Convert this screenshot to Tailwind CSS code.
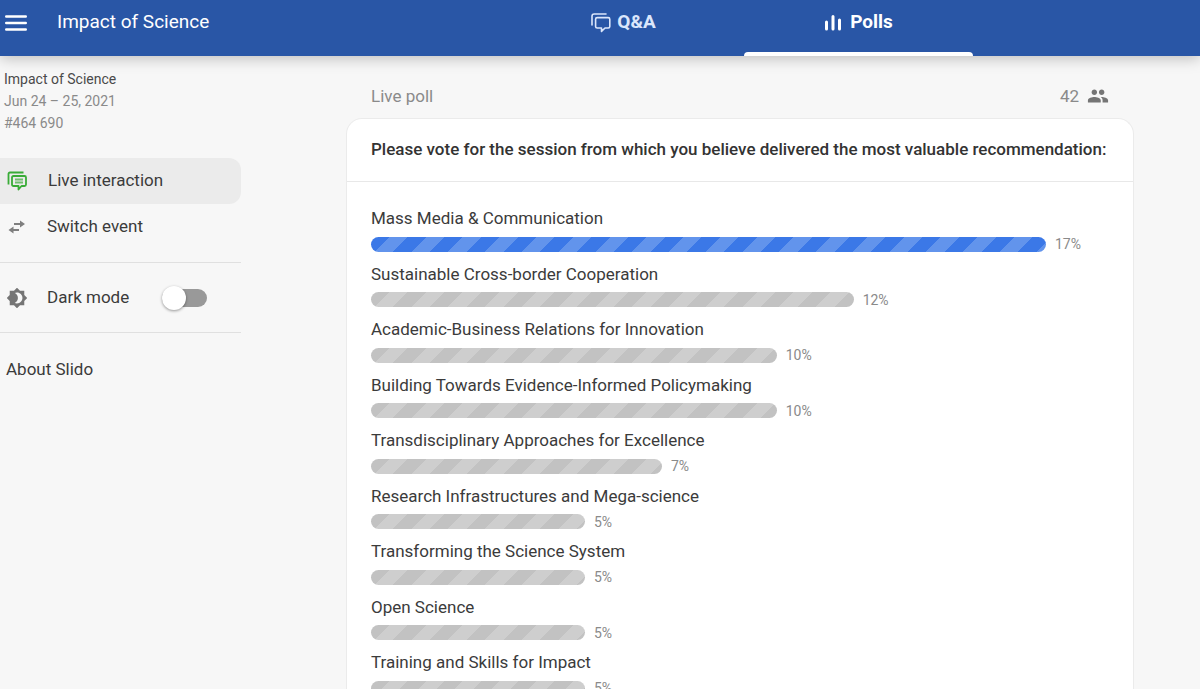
<!DOCTYPE html>
<html lang="en">
<head>
<meta charset="utf-8">
<meta name="viewport" content="width=device-width, initial-scale=1">
<title>Impact of Science – Polls</title>
<script src="https://cdn.jsdelivr.net/npm/@tailwindcss/browser@4"></script>
</head>
<body class="h-screen overflow-hidden flex flex-col bg-[#f7f7f7] font-[Roboto,sans-serif] text-[#3b3b3b]">
<header class="relative z-10 shrink-0 h-14 flex bg-[#2956a6] text-white shadow-[0_2px_14px_rgba(0,0,0,0.25)]">
  <div class="w-[515px] flex items-start pl-1 pt-2">
    <button type="button" aria-label="Menu" class="pt-[7px] mr-[30px]">
      <svg width="23" height="16" viewBox="0 0 23 16" class="block" stroke="#fff" stroke-width="2.400" stroke-linecap="round"><path d="M2.200 1.500h19.600M2.200 8h19.600M2.200 14.500h19.600"/></svg>
    </button>
    <h1 class="text-[19px] leading-7">Impact of Science</h1>
  </div>
  <nav class="flex">
    <a href="#qa" class="w-[229px] flex items-start justify-center gap-[6px] pt-2 pr-3 text-[19px] leading-7 font-bold text-[#dbe6fb]">
      <svg width="20" height="20" viewBox="0 0 20 20" class="mt-[5px]" fill="none" stroke="currentColor" stroke-width="1.600" stroke-linejoin="round" stroke-linecap="round"><path d="M1 12V3.200Q1 1 3.200 1H15"/><path d="M6.200 4.600H17.200Q18.800 4.600 18.800 6.200V13.400Q18.800 15 17.200 15H14L10.500 18.400V15H6.200Q4.600 15 4.600 13.400V6.200Q4.600 4.600 6.200 4.600Z"/></svg>
      Q&amp;A
    </a>
    <a href="#polls" aria-current="page" class="w-[229px] flex flex-col justify-between">
      <span class="flex justify-center gap-2 pt-2 text-[19px] leading-7 font-bold">
        <svg width="18" height="18" viewBox="0 0 18 18" class="mt-[6px]" stroke="#fff" stroke-width="3" stroke-linecap="round"><path d="M2.500 8v7M9 2.500V15M15.500 6v9"/></svg>
        Polls
      </span>
      <span class="h-1 rounded-t bg-white"></span>
    </a>
  </nav>
</header>
<div class="flex-1 min-h-0 flex">
  <aside class="w-[241px] shrink-0 pt-3 text-[17px]">
    <div class="pl-1 text-[14px] leading-[22px] text-[#8a8a8a]">
      <p class="text-[#4a4a4a]">Impact of Science</p>
      <p>Jun 24 – 25, 2021</p>
      <p>#464 690</p>
    </div>
    <nav class="mt-6 pb-3 border-b border-[#e0e0e0]">
      <a href="#live" aria-current="page" class="h-[46px] flex items-center gap-5 pl-[7px] rounded-r-xl bg-[#ebebeb]">
        <svg width="21" height="21" viewBox="0 0 21 21" fill="none" stroke="#39ac37" stroke-width="1.800" stroke-linejoin="round"><path d="M1.500 13.500V3Q1.500 1.500 3 1.500H16.500"/><path d="M6.500 5H17.500Q19 5 19 6.500V13.500Q19 15 17.500 15H14.500L11.500 18.500V15H6.500Q5 15 5 13.500V6.500Q5 5 6.500 5Z"/><path d="M8 8.500H16M8 11.500H16" stroke-width="2" opacity=".7"/></svg>
        Live interaction
      </a>
      <a href="#switch" class="h-[46px] flex items-center gap-[21px] pl-2">
        <svg width="18" height="14" viewBox="0 0 18 14" fill="#7f7f7f"><path d="M12 .500 17 4 12 7.500V5H6V3H12ZM5.500 6.500V9H11V11H5.500V13.500L.500 10Z"/></svg>
        Switch event
      </a>
    </nav>
    <div class="h-[70px] flex items-center gap-5 pl-[7px] border-b border-[#e0e0e0]">
      <svg width="20" height="20" viewBox="1 1 22 22" fill="#757575"><path d="M20 8.690V4h-4.690L12 .690 8.690 4H4v4.690L.690 12 4 15.310V20h4.690L12 23.310 15.310 20H20v-4.690L23.310 12 20 8.690zM12 18c-.890 0-1.740-.200-2.500-.550C11.560 16.500 13 14.420 13 12s-1.440-4.500-3.500-5.450C10.260 6.200 11.110 6 12 6c3.310 0 6 2.690 6 6s-2.690 6-6 6z"/></svg>
      <label for="dark" class="w-[95px]">Dark mode</label>
      <input id="dark" type="checkbox" role="switch" class="appearance-none w-[45px] h-[18px] rounded-full bg-[#999] flex items-center before:content-[''] before:block before:size-6 before:rounded-full before:bg-white before:shadow-[0_1px_3px_rgba(0,0,0,0.4)] checked:justify-end">
    </div>
    <a href="#about" class="block mt-[22px] pl-[6px] leading-7">About Slido</a>
  </aside>
  <main class="flex-1 pl-[105px] pr-[66px] pt-[26px] flex flex-col min-w-0">
    <div class="flex justify-between px-[25px] text-[17px] leading-7 text-[#8a8a8a]">
      <h2>Live poll</h2>
      <span class="flex items-center gap-2">42
        <svg width="22" height="22" viewBox="0 0 24 24" fill="#757575"><path d="M16 11c1.660 0 2.990-1.340 2.990-3S17.660 5 16 5c-1.660 0-3 1.340-3 3s1.340 3 3 3zm-8 0c1.660 0 2.990-1.340 2.990-3S9.660 5 8 5C6.340 5 5 6.340 5 8s1.340 3 3 3zm0 2c-2.330 0-7 1.170-7 3.500V19h14v-2.500c0-2.330-4.670-3.500-7-3.500zm8 0c-.290 0-.620.020-.970.050 1.160.840 1.970 1.970 1.970 3.450V19h6v-2.500c0-2.330-4.670-3.500-7-3.500z"/></svg>
      </span>
    </div>
    <section class="mt-2 flex-1 bg-white border border-b-0 border-[#ebebeb] rounded-t-2xl">
      <h3 class="px-6 pt-4 pb-[18px] border-b border-[#e8e8e8] text-[17px] leading-7 font-medium text-[#333]">Please vote for the session from which you believe delivered the most valuable recommendation:</h3>
      <ul id="options" class="grid auto-rows-fr min-h-[500px] pl-6 pr-[87px] mt-[22px] text-[17px] leading-7"></ul>
    </section>
  </main>
</div>
<template id="row">
  <li>
    <p></p>
    <div class="flex items-center gap-[9px] h-6">
      <div class="shrink-0 h-[15px] rounded-full"></div>
      <span class="text-[14px] text-[#8a8a8a]"></span>
    </div>
  </li>
</template>
<script>
const lead = 'bg-[repeating-linear-gradient(135deg,#3b78e7_0_13px,#6294ec_13px_26px)]';
const rest = 'bg-[repeating-linear-gradient(135deg,#c2c2c2_0_13px,#cecece_13px_26px)]';
const options = [
  ['Mass Media & Communication', 17, 100],
  ['Sustainable Cross-border Cooperation', 12, 71.5],
  ['Academic-Business Relations for Innovation', 10, 60.1],
  ['Building Towards Evidence-Informed Policymaking', 10, 60.1],
  ['Transdisciplinary Approaches for Excellence', 7, 43.1],
  ['Research Infrastructures and Mega-science', 5, 31.7],
  ['Transforming the Science System', 5, 31.7],
  ['Open Science', 5, 31.7],
  ['Training and Skills for Impact', 5, 31.7]
];
const list = document.getElementById('options');
for (const [name, share, width] of options) {
  const row = document.getElementById('row').content.cloneNode(true);
  row.querySelector('p').textContent = name;
  const bar = row.querySelector('div > div');
  bar.classList.add(share === 17 ? lead : rest);
  bar.style.width = width + '%';
  row.querySelector('span').textContent = share + '%';
  list.append(row);
}
</script>
</body>
</html>
